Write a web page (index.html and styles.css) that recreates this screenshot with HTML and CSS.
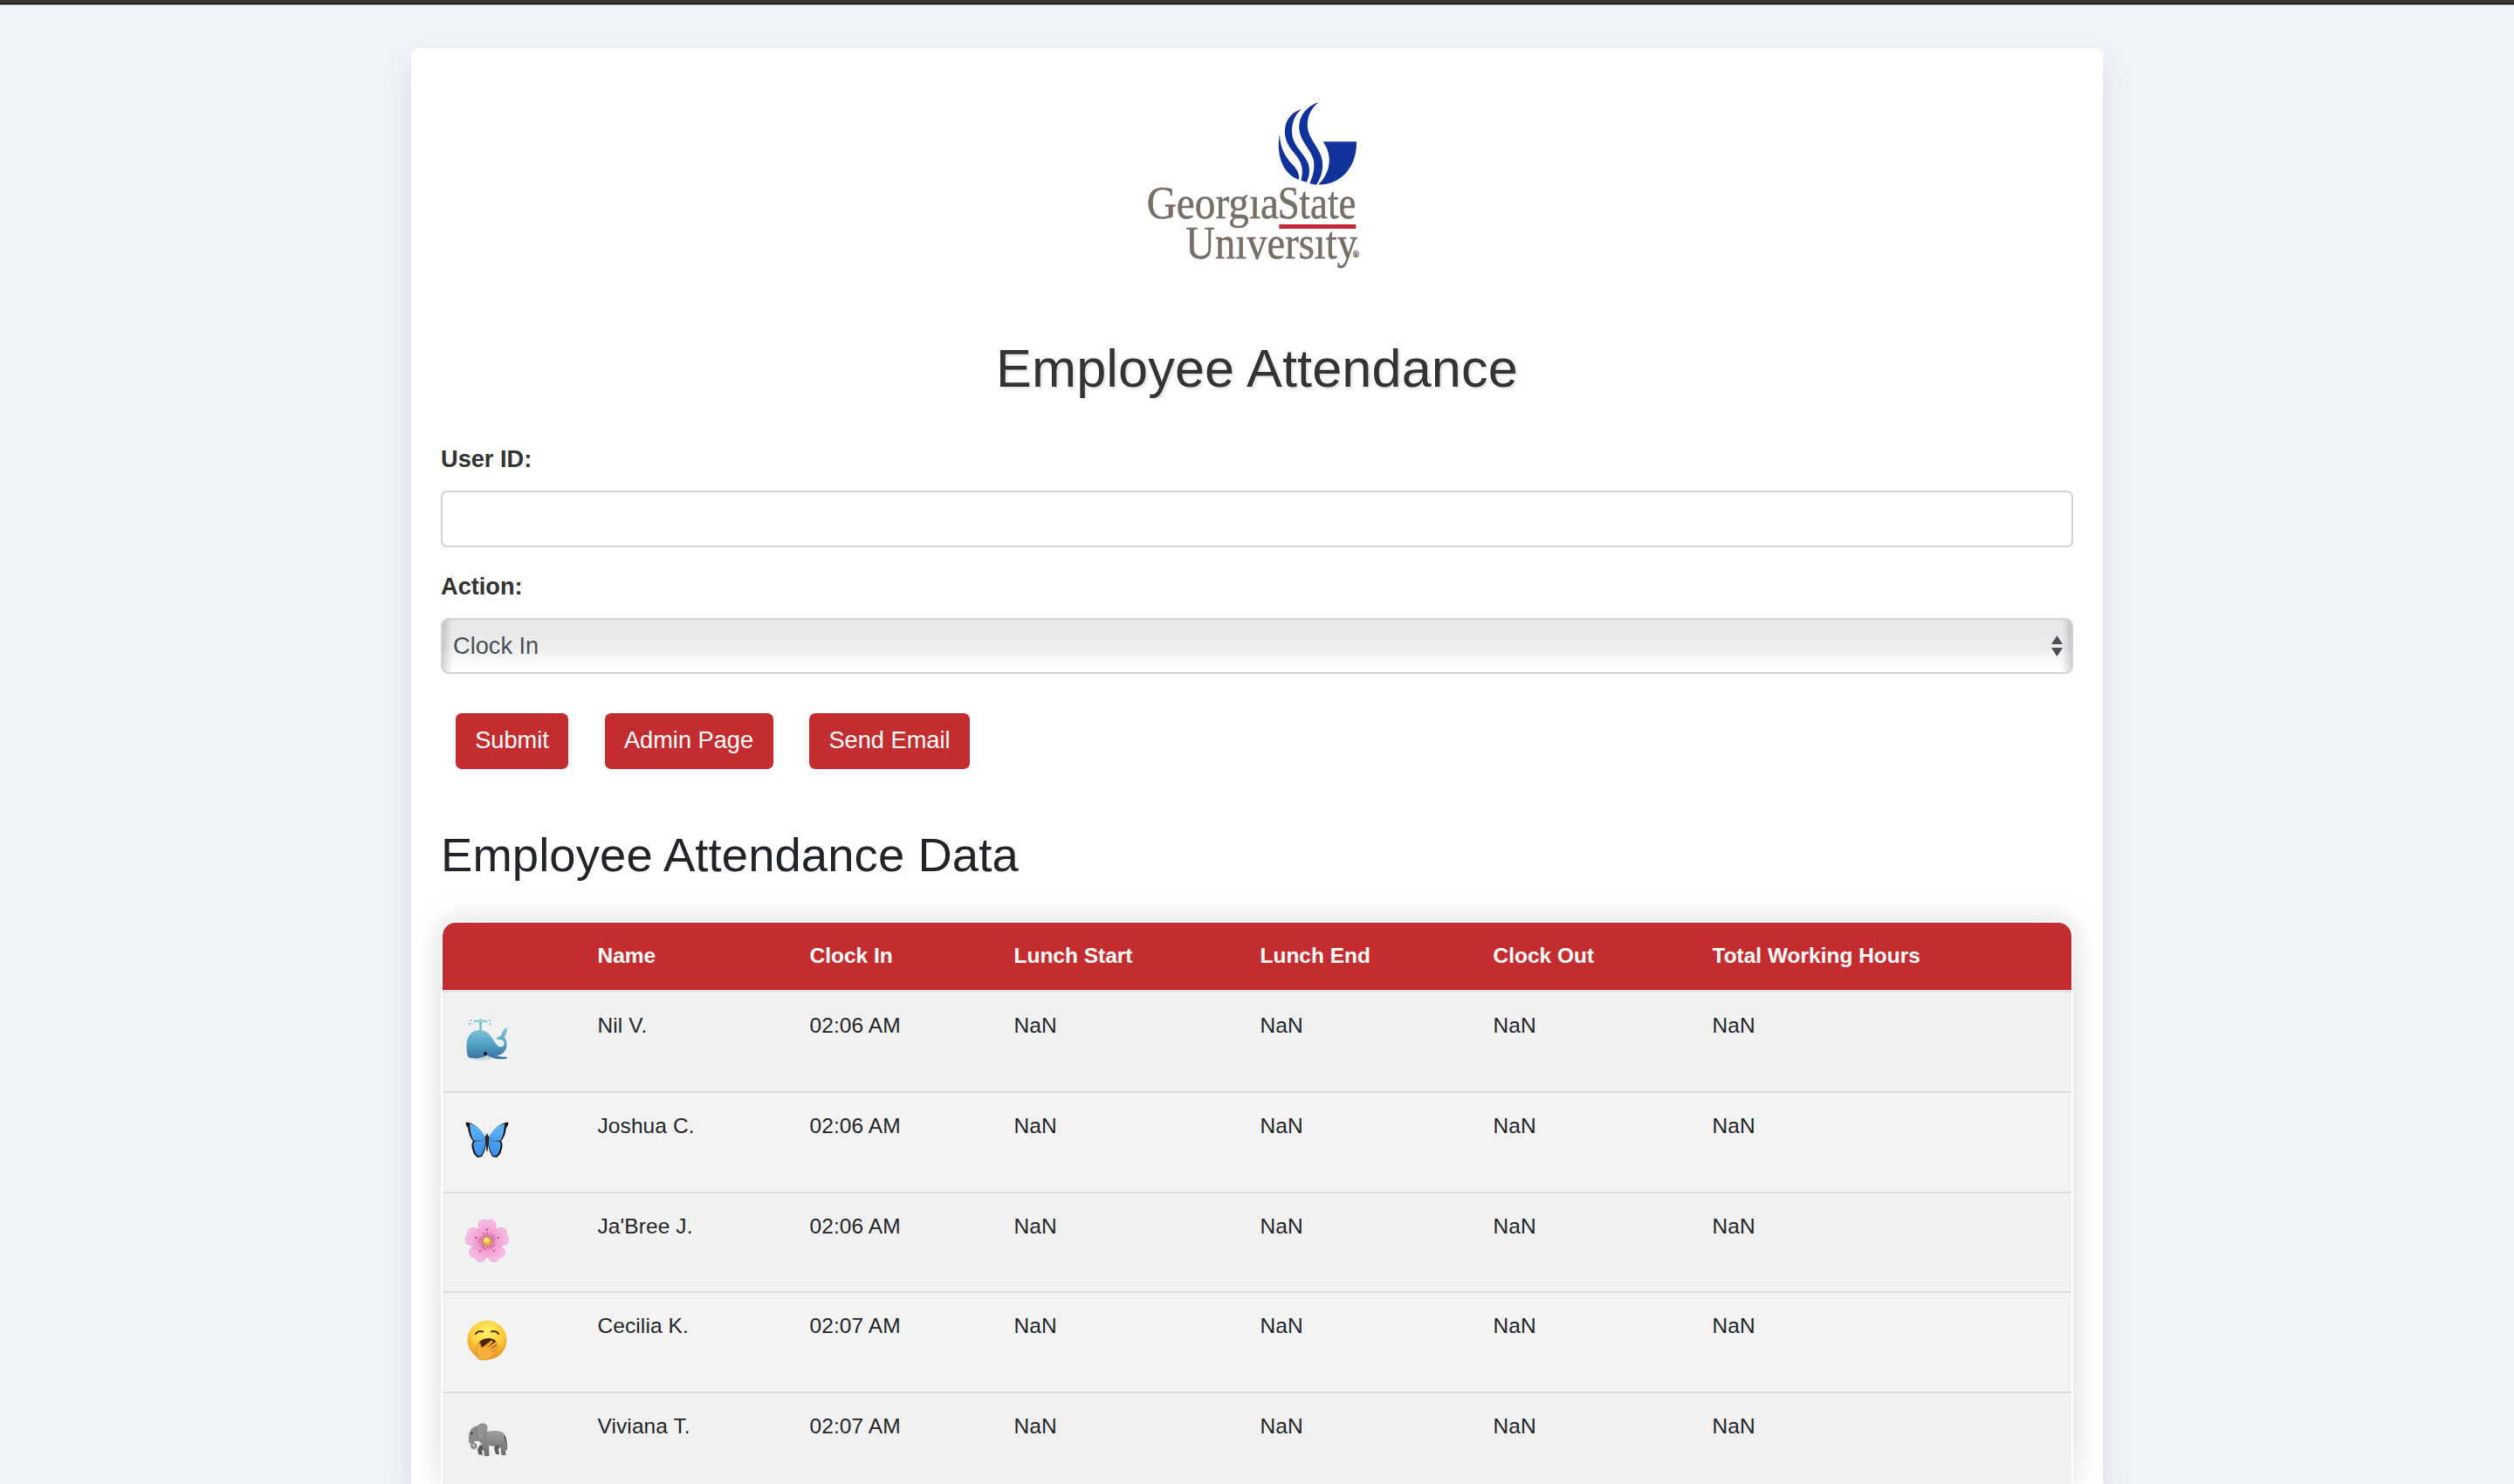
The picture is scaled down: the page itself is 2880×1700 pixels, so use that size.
FILE: index.html
```html
<!DOCTYPE html>
<html lang="en">
<head>
<meta charset="utf-8">
<title>Employee Attendance</title>
<link rel="stylesheet" href="styles.css">
</head>
<body>
<div class="topbar"></div>
<main class="card">
  <svg class="logo" viewBox="0 0 900 690" role="img" aria-label="Georgia State University">
    <g fill="#12329b">
      <path d="M528 160C514 238 542 300 594 318C596 300 590 286 577 271C550 243 528 212 528 160Z"/>
      <path d="M604 75C562 86 542 122 546 163C552 206 578 222 594 248C608 272 608 296 601 320L621 326C630 304 633 284 626 262C614 230 580 206 572 170C566 134 576 95 604 75Z"/>
      <path d="M662 52C622 64 593 98 595 142C598 188 636 212 645 252C649 284 641 308 631 330Q642 335 655 334C671 308 679 282 674 250C668 214 636 186 626 150C617 112 632 74 662 52Z"/>
      <path d="M677 187H792C794 272 738 338 661 334C688 308 700 276 698 244C696 218 688 204 677 187Z"/>
    </g>
    <g class="logo-text">
      <text x="71" y="451" font-size="156" textLength="454" lengthAdjust="spacingAndGlyphs">Georgıa</text>
      <text x="521" y="451" font-size="158" textLength="269" lengthAdjust="spacingAndGlyphs">State</text>
      <text x="205" y="587" font-size="156" textLength="590" lengthAdjust="spacingAndGlyphs">Unıversıty</text>
      <text x="779" y="586" font-size="28">®</text>
    </g>
    <rect x="526" y="471" width="264" height="15" fill="#c22b34"/>
  </svg>

  <h1 class="title">Employee Attendance</h1>

  <form class="form">
    <label class="label" for="uid">User ID:</label>
    <input class="control" id="uid" type="text">
    <label class="label" for="action">Action:</label>
    <div class="select-wrap">
      <select class="control select" id="action"><option>Clock In</option></select>
      <svg class="select-arrows" viewBox="0 0 13 24"><path d="M6.500 0L13 10H0ZM6.500 24L13 14H0Z"/></svg>
    </div>
    <div class="buttons">
      <button class="btn submit" type="button">Submit</button>
      <button class="btn admin" type="button">Admin Page</button>
      <button class="btn email" type="button">Send Email</button>
    </div>
  </form>

  <h2 class="subtitle">Employee Attendance Data</h2>

  <div class="table-box">
    <table class="table">
      <colgroup><col class="c-icon"><col class="c-name"><col class="c-in"><col class="c-ls"><col class="c-le"><col class="c-out"><col></colgroup>
      <thead>
        <tr><th></th><th>Name</th><th>Clock In</th><th>Lunch Start</th><th>Lunch End</th><th>Clock Out</th><th>Total Working Hours</th></tr>
      </thead>
      <tbody>
        <tr>
          <td><svg class="emoji" viewBox="0 0 50 50">
            <defs><linearGradient id="whale" x1="0" y1="0" x2="0" y2="1"><stop offset="0" stop-color="#86c8d8"/><stop offset=".55" stop-color="#4f9fc4"/><stop offset="1" stop-color="#3a6f9e"/></linearGradient></defs>
            <path d="M4 46Q16 51 31 47L27 43Z" fill="#c9d6d8"/>
            <path d="M17.500 14.500V5" fill="none" stroke="#5cbdd3" stroke-width="2.400"/>
            <path d="M17.500 6Q13 1 10 5M17.500 6Q22 1 25 5M17.500 4V1M7 2l-1 1.500M27 2l1.500 1.500M5 6v2M29 6v2" fill="none" stroke="#5cbdd3" stroke-width="1.600"/>
            <path d="M17 14C7 14 1.500 21 1.500 31C1.500 39 2 43 4 45.500C12 47 21 46 25 43C30 46 38 48.500 48 46.500L47 44.500C43 45 40 44.500 36 43.500C44 42 48 36 47.500 30C47.500 26 46 24 44.500 22C47 19 48.500 14 48 11C44 12 42 17 41 20C38 23 36 22 35.500 24C38 26 42 24 44 27C46 31 43 34 39 33C32 29 29 14 17 14Z" fill="url(#whale)"/>
            <circle cx="23" cy="41" r="2" fill="#111"/>
          </svg></td>
          <td>Nil V.</td><td>02:06 AM</td><td>NaN</td><td>NaN</td><td>NaN</td><td>NaN</td>
        </tr>
        <tr>
          <td><svg class="emoji" viewBox="0 0 50 50">
            <defs><linearGradient id="wing" x1="0" y1="0" x2="0" y2="1"><stop offset="0" stop-color="#63b8f6"/><stop offset="1" stop-color="#3c90ec"/></linearGradient></defs>
            <path d="M24 21L21 9M26 21L29 9" stroke="#d3d3d3" stroke-width=".7"/>
            <g id="halfwing">
              <path d="M23.500 24C20 13 9 5 1 4.500C0 6 1 9 3 11C4 17 5 22 9 26C6 30 8 36 10 41L14 45L19 44C22 39 24 33 24 27Z" fill="#17191f"/>
              <path d="M23 23C20 14 13 8 5 6.500C5.500 15 7 22 10 25.500L23 26ZM23 26L11 26.500C8 29 10 36 13 41.500L15 43L18.500 42.500C21 37 23.500 33 23 26Z" fill="url(#wing)"/>
              <path d="M22 25L7 10M22 25L9 20M22 27L13 38M22 28L18 40" stroke="#2b78cc" stroke-width=".4"/>
            </g>
            <use href="#halfwing" transform="matrix(-1 0 0 1 50 0)"/>
            <path d="M25 17L27.500 22L26.500 30L25.500 38H24.500L23.500 30L22.500 22Z" fill="#2d2525"/>
          </svg></td>
          <td>Joshua C.</td><td>02:06 AM</td><td>NaN</td><td>NaN</td><td>NaN</td><td>NaN</td>
        </tr>
        <tr>
          <td><svg class="emoji" viewBox="0 0 50 50">
            <defs><radialGradient id="petal" gradientUnits="userSpaceOnUse" cx="25" cy="26" r="25"><stop offset=".15" stop-color="#d0639c"/><stop offset=".45" stop-color="#f29fce"/><stop offset="1" stop-color="#f8bfe6"/></radialGradient>
            <g id="leaf"><path d="M25 27C18 22 14 13 15 6C16 2 20 .5 23 1.500L25 2.500L27 1.500C30 .5 34 2 35 6C36 13 32 22 25 27Z" fill="url(#petal)" stroke="#e08fc4" stroke-width=".5"/><path d="M25 22V15" stroke="#ca6298" stroke-width=".7"/><circle cx="25" cy="12.500" r=".9" fill="#7a2550"/><circle cx="21.500" cy="17" r=".6" fill="#7a2550"/></g></defs>
            <use href="#leaf"/><use href="#leaf" transform="rotate(72 25 26)"/><use href="#leaf" transform="rotate(144 25 26)"/><use href="#leaf" transform="rotate(216 25 26)"/><use href="#leaf" transform="rotate(288 25 26)"/>
            <circle cx="25" cy="26" r="5.200" fill="#dfa733"/><circle cx="24.500" cy="25" r="3.200" fill="#f7dc73"/>
          </svg></td>
          <td>Ja'Bree J.</td><td>02:06 AM</td><td>NaN</td><td>NaN</td><td>NaN</td><td>NaN</td>
        </tr>
        <tr>
          <td><svg class="emoji" viewBox="0 0 50 50">
            <defs><radialGradient id="face" cx=".5" cy=".3" r=".7"><stop offset="0" stop-color="#fff26b"/><stop offset=".6" stop-color="#fbc93a"/><stop offset="1" stop-color="#ea8f22"/></radialGradient></defs>
            <circle cx="25" cy="25" r="22.500" fill="url(#face)"/>
            <path d="M12 18Q15 14 20 15.500M30 15.500Q35 14 38 18" fill="none" stroke="#533014" stroke-width="2" stroke-linecap="round"/>
            <path d="M14 34C14 20 36 20 36 30L30 39H16Z" fill="#4d250f"/>
            <path d="M14 46C13 39 12 34 14 31L17 28L19 34L30 25.500L32 27L25 34L35 27L37 29L28 36L37 31L38 33L30 39L36 36L37 38C32 43 28 48 21 48Q16 48 14 46Z" fill="#f5ae3a" stroke="#c9741c" stroke-width=".6"/>
          </svg></td>
          <td>Cecilia K.</td><td>02:07 AM</td><td>NaN</td><td>NaN</td><td>NaN</td><td>NaN</td>
        </tr>
        <tr>
          <td><svg class="emoji" viewBox="0 0 50 50">
            <defs><linearGradient id="hide" x1="0" y1="0" x2="0" y2="1"><stop offset="0" stop-color="#9da09f"/><stop offset="1" stop-color="#6a6d6c"/></linearGradient></defs>
            <path d="M17 30L14 35L15 41L20 42L19 37L25 32ZM35 29L33 34L35 41H39L38 35L42 29Z" fill="#5b5e5d"/>
            <path d="M21 16C28 14 38 13 43 16C47 19 47 25 46 32L46.500 42H41.500L40.500 34L38.500 30Q33 33 27 31L27.500 43H22L20 31L16 26Z" fill="url(#hide)"/>
            <path d="M45 20Q48 28 47 36" fill="none" stroke="#3d3f3f" stroke-width="1.300"/>
            <path d="M6 28C4 33 6 37 9 35.500C11 34 10 31 8 31.500" transform="translate(2 -2)" fill="none" stroke="#868988" stroke-width="2.800"/>
            <path d="M4 22C4 13 9 8 15 9L20 18L16 26L11 26L9 30L4 30Z" fill="#898c8b"/>
            <path d="M13 11C15 5 22 5 24.500 8C26 12 23 24 18 25C14 23 12 18 13 11Z" fill="#929594" stroke="#6b6e6d" stroke-width=".7"/>
            <circle cx="7.500" cy="17" r="1.200" fill="#222"/><path d="M4 27L2 31L7 30Z" fill="#eee"/>
          </svg></td>
          <td>Viviana T.</td><td>02:07 AM</td><td>NaN</td><td>NaN</td><td>NaN</td><td>NaN</td>
        </tr>
      </tbody>
    </table>
  </div>
</main>
</body>
</html>
```

FILE: styles.css
```css
* { box-sizing: border-box; }

body {
  margin: 0;
  height: 1700px;
  overflow: hidden;
  background: #f0f4f8;
  color: #212529;
  font-family: "Liberation Sans", Arial, sans-serif;
  font-size: 27.2px;
  line-height: 1.5;
}

.topbar {
  height: 6px;
  background: #3b3532;
  border-bottom: 1px solid #b0b2b4;
  box-shadow: inset 0 -1px 0 #000;
}

.card {
  width: 1938px;
  height: 1645px;
  margin: 49px auto 0;
  padding: 45px 34px 0;
  background: #fff;
  border-radius: 8px 8px 0 0;
  box-shadow: 0 17px 34px rgba(0, 0, 0, .1);
}

.logo {
  display: block;
  width: 300px;
  height: 230px;
  margin: 0 auto;
}

.logo-text {
  fill: #766f65;
  stroke: #766f65;
  stroke-width: 1.5px;
  font-family: "Liberation Serif", serif;
}

.title {
  margin: 55px 0 0;
  color: #333;
  font-size: 61.2px;
  font-weight: 400;
  letter-spacing: .13px;
  line-height: 74px;
  text-align: center;
  text-shadow: 2px 2px 3px rgba(0, 0, 0, .12);
}

.form { margin-top: 47px; }

.label {
  display: block;
  height: 41px;
  margin-bottom: 15px;
  color: #333;
  font-weight: 700;
}

.control {
  display: block;
  width: 100%;
  height: 65px;
  margin: 0 0 25px;
  border: 2px solid #ced4da;
  border-radius: 7px;
  background: #fff;
  color: #495057;
  font: inherit;
}

.select-wrap { position: relative; }

.select {
  height: 64px;
  margin: 0;
  padding: 0 12px;
  appearance: none;
  border-radius: 9px;
  background:
    linear-gradient(90deg, rgba(0, 0, 0, .16), transparent 11px, transparent calc(100% - 11px), rgba(0, 0, 0, .16)),
    linear-gradient(#e6e6e6, #ededed 52%, #f8f8f8 76%, #fff);
}

.select-arrows {
  position: absolute;
  right: 12px;
  top: 20px;
  width: 13px;
  height: 24px;
  fill: #495057;
}

.buttons {
  display: flex;
  gap: 41.5px;
  margin: 45px 17px 0;
}

.btn {
  height: 64px;
  padding: 0 0 2px;
  border: 0;
  border-radius: 7px;
  background: #c42d30;
  color: #fff;
  font: inherit;
}

.submit { width: 129px; }
.admin { width: 193px; }
.email { width: 184px; }

.subtitle {
  margin: 66px 0 42px;
  font-size: 54.4px;
  font-weight: 400;
  letter-spacing: .11px;
  line-height: 66px;
}

.table-box {
  padding: 2px 2px 0;
  border-radius: 17px 17px 0 0;
  background: #fff;
  box-shadow: 0 0 34px rgba(0, 0, 0, .15);
  height: 645px;
  overflow: hidden;
}

.table {
  width: 1866px;
  table-layout: fixed;
  border-collapse: separate;
  border-spacing: 0;
  font-size: 24.48px;
  line-height: 37px;
}

.c-icon { width: 152px; }
.c-name { width: 243px; }
.c-in { width: 234px; }
.c-ls { width: 282px; }
.c-le { width: 267px; }
.c-out { width: 251px; }

th {
  height: 80px;
  padding: 19px 25.5px 0;
  border-bottom: 3px solid #dee2e6;
  background: #c42d30;
  color: #fff;
  text-align: left;
  vertical-align: top;
}

th:first-child { border-top-left-radius: 15px; }
th:last-child { border-top-right-radius: 15px; }

td {
  height: 114.75px;
  padding: 19px 25.5px 0;
  border-bottom: 2px solid #ddd;
  background: #f1f1f1;
  letter-spacing: .1px;
  vertical-align: top;
}

tr:nth-child(even) td { background: #f3f3f3; }

.emoji {
  display: block;
  width: 50px;
  height: 50px;
  margin-top: 10px;
}
```
